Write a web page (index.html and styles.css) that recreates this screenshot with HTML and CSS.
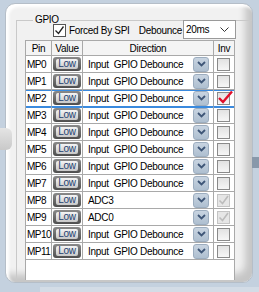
FILE: index.html
```html
<!DOCTYPE html>
<html>
<head>
    <title>GPIO</title>
    <link rel="stylesheet" href="styles.css">
</head>
<body>

<div class="knob"></div>
<div class="side-tab"></div>

<div class="panel">
    <div class="group">
        <div class="group-title">GPIO</div>
        <div class="options">
            <span class="cb cb-on">
                <svg width="11" height="11" viewBox="0 0 11 11"><path d="M1.5 5.5 L4.5 8.5 L9.5 1.5" fill="none" stroke="#222" stroke-width="1.3"/></svg>
            </span>
            <span class="opt-text">Forced By SPI</span>
            <span class="deb-label">Debounce</span>
            <div class="select">
                <span>20ms</span>
                <svg width="9" height="6" viewBox="0 0 9 6"><path d="M0.5 0.5 L4.5 4.5 L8.5 0.5" fill="none" stroke="#333" stroke-width="1"/></svg>
            </div>
        </div>

        <div class="grid">
            <div class="row head">
                <div class="cell c-center">Pin</div>
                <div class="cell c-center">Value</div>
                <div class="cell c-center">Direction</div>
                <div class="cell c-center">Inv</div>
            </div>
            <div id="rows"></div>
        </div>
    </div>
</div>

<div class="bottom-strip"></div>

<script>
    const pins = [
        ['MP0', 'Input  GPIO Debounce', ''],
        ['MP1', 'Input  GPIO Debounce', ''],
        ['MP2', 'Input  GPIO Debounce', 'red'],
        ['MP3', 'Input  GPIO Debounce', ''],
        ['MP4', 'Input  GPIO Debounce', ''],
        ['MP5', 'Input  GPIO Debounce', ''],
        ['MP6', 'Input  GPIO Debounce', ''],
        ['MP7', 'Input  GPIO Debounce', ''],
        ['MP8', 'ADC3', 'dis'],
        ['MP9', 'ADC0', 'dis'],
        ['MP10', 'Input  GPIO Debounce', ''],
        ['MP11', 'Input  GPIO Debounce', '']
    ];

    const chevron = '<svg width="9" height="6" viewBox="0 0 9 6"><path d="M1 1 L4.5 4.5 L8 1" fill="none" stroke="#3e5677" stroke-width="1.8"/></svg>';
    const redCheck = '<svg class="red-check" width="17" height="14" viewBox="0 0 17 14"><path d="M2 8 L6 12 L15 1.5" fill="none" stroke="#e0102c" stroke-width="2.4"/></svg>';
    const greyCheck = '<svg width="11" height="11" viewBox="0 0 11 11"><path d="M1.5 5.5 L4.5 8.5 L10 1" fill="none" stroke="#bcbcbc" stroke-width="1.6"/></svg>';

    let html = '';
    pins.forEach(function (p, i) {
        let box = '<span class="inv-box"></span>';
        if (p[2] === 'red') box = '<span class="inv-box">' + redCheck + '</span>';
        if (p[2] === 'dis') box = '<span class="inv-box inv-dis">' + greyCheck + '</span>';
        html += '<div class="row' + (i === 2 ? ' sel' : '') + '">' +
            '<div class="cell c-pin">' + p[0] + '</div>' +
            '<div class="cell c-val"><span class="low"><span>Low</span></span></div>' +
            '<div class="cell c-dir"><span class="dir-text">' + p[1] + '</span><span class="dd">' + chevron + '</span></div>' +
            '<div class="cell c-inv">' + box + '</div>' +
            '</div>';
    });
    document.getElementById('rows').innerHTML = html;
</script>

</body>
</html>
```

FILE: styles.css
```css
body {
    margin: 0;
    width: 259px;
    height: 292px;
    overflow: hidden;
    background-color: #c4d1df;
    font-family: "Liberation Sans", Arial, sans-serif;
    font-size: 10px;
    letter-spacing: -0.3px;
    color: #000;
    position: relative;
}
.knob {
    position: absolute;
    left: -10px;
    top: 128px;
    width: 22px;
    height: 22px;
    border-radius: 6px;
    background: linear-gradient(#e4e4e4, #c9c9c9);
}
.side-tab {
    position: absolute;
    right: 0;
    top: 157px;
    width: 7px;
    height: 11px;
    background-color: #8898aa;
}
.panel {
    margin: 3px 6px 0 5px;
    height: 280px;
    box-sizing: border-box;
    border: 1px solid #b5bec8;
    border-radius: 10px;
    background-color: #f1f1f1;
    box-shadow: inset 3px 3px 3px #ffffff, inset -7px -8px 7px rgba(0, 0, 0, 0.18);
    overflow: hidden;
    padding: 16px 0 0 10px;
}
.bottom-strip {
    margin: 4px 0 0 40px;
    height: 10px;
    background-color: #d3dce6;
}
.group {
    border-left: 1px solid #c9c9c9;
    border-top: 1px solid #c9c9c9;
    width: 228px;
    padding-left: 8px;
}
.group-title {
    width: fit-content;
    margin: -7px 0 0 8px;
    padding: 0 2px;
    line-height: 12px;
    background-color: #f1f1f1;
}
.options {
    display: flex;
    align-items: center;
    width: 211px;
    height: 20px;
    margin-top: -6px;
}
.cb {
    width: 13px;
    height: 13px;
    box-sizing: border-box;
    border: 1px solid #555;
    background-color: #fff;
    margin-left: 28px;
    display: flex;
    align-items: center;
    justify-content: center;
}
.opt-text {
    margin-left: 3px;
}
.deb-label {
    margin-left: auto;
    margin-right: 1px;
}
.select {
    width: 53px;
    height: 19px;
    box-sizing: border-box;
    border: 1px solid #9a9a9a;
    background-color: #fff;
    display: flex;
    align-items: center;
    justify-content: space-between;
    padding: 0 6px 0 2px;
    align-self: flex-start;
}
.grid {
    width: 210px;
    height: 240px;
    box-sizing: border-box;
    border: 1px solid #a9a9a9;
    border-bottom: none;
    background-color: #fff;
}
.row {
    display: grid;
    grid-template-columns: 26px 31px 131px 20px;
    height: 17px;
}
.row.head {
    height: 15px;
    background-color: #f4f4f4;
}
.row.sel {
    box-shadow: 0 -1px 0 #3a8ade, inset 0 1px 0 #3a8ade, 0 1px 0 #3a8ade;
}
.row.sel .cell {
    border-bottom-color: #3a8ade;
}
.cell {
    box-sizing: border-box;
    border-right: 1px solid #a9a9a9;
    border-bottom: 1px solid #a9a9a9;
    display: flex;
    align-items: center;
    white-space: pre;
    overflow: visible;
}
.cell:last-child {
    border-right: none;
}
.c-center {
    justify-content: center;
}
.c-pin {
    padding-left: 1px;
    letter-spacing: -0.5px;
}
.c-val {
    padding-left: 1px;
}
.low {
    width: 28px;
    height: 14px;
    box-sizing: border-box;
    border-radius: 3px;
    background: linear-gradient(#8a8a8a, #4e4e4e);
    padding: 2px 3px 2px 3px;
    display: flex;
}
.low span {
    flex: 1;
    border-radius: 2px;
    background: linear-gradient(#f4f4f4, #c8c8c8);
    color: #23406e;
    font-size: 10px;
    line-height: 10px;
    text-align: center;
}
.c-dir {
    padding-left: 5px;
    justify-content: space-between;
    padding-right: 4px;
}
.dd {
    width: 16px;
    height: 15px;
    box-sizing: border-box;
    border: 1px solid #9cadbf;
    border-radius: 3px;
    background: linear-gradient(#c8d4e1, #aebfd0);
    display: flex;
    align-items: center;
    justify-content: center;
}
.c-inv {
    padding-left: 3px;
}
.inv-box {
    width: 13px;
    height: 13px;
    box-sizing: border-box;
    border: 1px solid #8a8a8a;
    background: linear-gradient(#e2e2e2, #f6f6f6);
    position: relative;
    display: flex;
    align-items: center;
    justify-content: center;
}
.inv-dis {
    border-color: #c4c4c4;
    background: #e6e6e6;
}
.red-check {
    position: absolute;
    left: -1px;
    top: -3px;
}
```
